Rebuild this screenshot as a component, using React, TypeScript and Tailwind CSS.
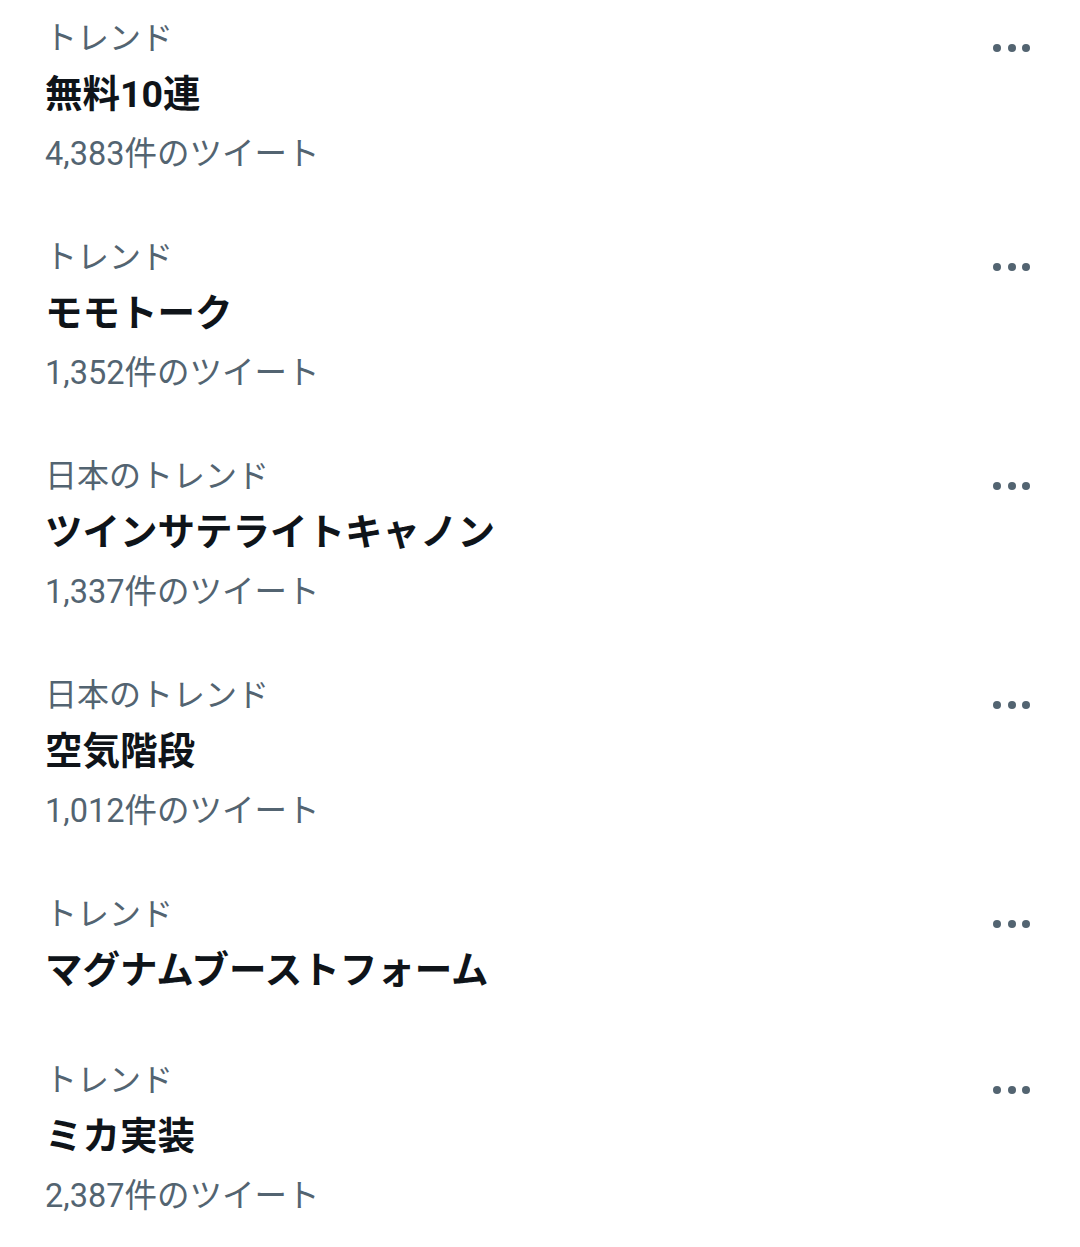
import React from "react";

type Trend = { label: string; title: string; count?: string };

const trends: Trend[] = [
  { label: "トレンド", title: "無料10連", count: "4,383件のツイート" },
  { label: "トレンド", title: "モモトーク", count: "1,352件のツイート" },
  { label: "日本のトレンド", title: "ツインサテライトキャノン", count: "1,337件のツイート" },
  { label: "日本のトレンド", title: "空気階段", count: "1,012件のツイート" },
  { label: "トレンド", title: "マグナムブーストフォーム" },
  { label: "トレンド", title: "ミカ実装", count: "2,387件のツイート" },
];

function Dots() {
  return (
    <div className="mt-[28px] flex h-[8px] items-center gap-[6.5px]">
      <span className="block h-[8px] w-[8px] rounded-full bg-[#536471]" />
      <span className="block h-[8px] w-[8px] rounded-full bg-[#536471]" />
      <span className="block h-[8px] w-[8px] rounded-full bg-[#536471]" />
    </div>
  );
}

export default function App() {
  return (
    <div
      className="min-h-[1247px] w-[1080px] bg-white"
      style={{ fontFamily: 'Roboto, "Noto Sans CJK JP", "Noto Sans", sans-serif' }}
    >
      {trends.map((t, i) => (
        <div
          key={i}
          className={
            t.count
              ? "flex items-start pl-[45px] pr-[50px] pt-[16px] pb-[39px]"
              : "flex items-start pl-[45px] pr-[50px] pt-[16px] pb-[42px]"
          }
        >
          <div className="flex flex-1 flex-col">
            <div className="h-[44px] text-[32px] leading-[44px] text-[#536471]">{t.label}</div>
            <div className="mt-[4px] h-[60px] text-[37.5px] font-bold leading-[60px] text-[#0f1419]">
              {t.title}
            </div>
            {t.count && (
              <div className="mt-[4px] h-[52px] text-[32.5px] leading-[52px] text-[#536471]">
                {t.count}
              </div>
            )}
          </div>
          <Dots />
        </div>
      ))}
    </div>
  );
}
